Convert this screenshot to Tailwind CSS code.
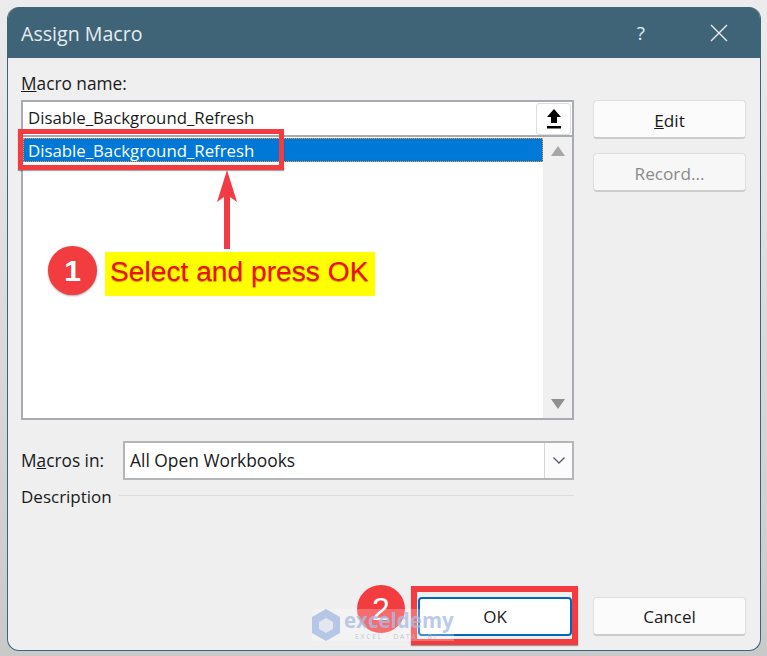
<!DOCTYPE html>
<html>
<head>
    <meta charset="utf-8" />
    <title>Assign Macro</title>
    <script src="https://cdn.jsdelivr.net/npm/@tailwindcss/browser@4"></script>
</head>
<body class="bg-[#e4e4e4] font-['Open_Sans',sans-serif] text-[#1a1a1a]">
    <div class="relative w-[767px] h-[656px] overflow-hidden pt-[7px] pl-[7px] bg-gradient-to-b from-[#ececec] to-[#c9c9c9]">
        <!-- dialog -->
        <div class="w-[754px] h-[644px] flex flex-col rounded-[12px] overflow-hidden bg-[#efefef] border-r border-b border-l border-[#3f6377]">
            <div class="h-[51px] shrink-0 bg-[#3f6377] flex items-center text-white pl-[13px]">
                <span class="text-[19.6px] text-[#e6edf0] mt-[2px]">Assign Macro</span>
                <span class="ml-auto text-[19px] text-[#e6edf0] mt-[1px]">?</span>
                <svg class="ml-[65px] mr-[32px]" width="18" height="18" viewBox="0 0 18 18" fill="none" stroke="#e6edf0" stroke-width="1.4"><path d="M1 1L17 17M17 1L1 17"/></svg>
            </div>
            <div class="flex-1 flex flex-col pl-[13px] pr-[14px]">
                <div class="flex gap-[19px]">
                    <!-- left column -->
                    <div class="w-[553px]">
                        <div class="h-[42px] pt-[14px] text-[17.3px] leading-[24px]"><span class="underline">M</span>acro name:</div>
                        <div class="h-[35px] bg-white border-2 border-b-0 border-[#a9abb2] flex items-center pl-[5px] text-[16.8px] pb-[1px]">
                            <span>Disable_Background_Refresh</span>
                            <div class="ml-auto mr-[1px] mt-[1px] w-[35px] h-[32px] rounded-[3px] bg-white border border-[#dedede] flex items-center justify-center">
                                <svg width="14" height="20" viewBox="0 0 14 20" fill="#000"><path d="M7 0L14 8H10V14H4V8H0Z"/><rect y="17" width="14" height="2.5"/></svg>
                            </div>
                        </div>
                        <div class="h-[285px] bg-white border-2 border-[#a9abb2] flex">
                            <div class="flex-1 pt-[1px]">
                                <div class="h-[24px] pt-[2px] bg-[#0078d7] border border-dotted border-[#ff9a3c] flex items-center pl-[4px] text-[16.8px] text-white">Disable_Background_Refresh</div>
                            </div>
                            <div class="w-[29px] bg-[#f0f0f0] flex flex-col items-center justify-between pt-[9px] pb-[9px]">
                                <svg width="14" height="10" viewBox="0 0 14 10" fill="#a6a6a6"><path d="M7 0L14 10H0Z"/></svg>
                                <svg width="14" height="10" viewBox="0 0 14 10" fill="#8f8f8f"><path d="M0 0H14L7 10Z"/></svg>
                            </div>
                        </div>
                        <div class="mt-[21px] flex items-center h-[39px]">
                            <div class="w-[102px] text-[17.3px]">M<span class="underline">a</span>cros in:</div>
                            <div class="flex-1 h-full bg-white border-2 border-[#b4b5b9] flex items-center pl-[5px] text-[17.4px]">
                                <span>All Open Workbooks</span>
                                <div class="ml-auto w-[28px] h-full bg-[#fbfbfb] border-l border-[#d5d5d5] flex items-center justify-center">
                                    <svg width="12" height="7" viewBox="0 0 12 7" fill="none" stroke="#555b66" stroke-width="1.3"><path d="M0.5 0.5L6 6L11.5 0.5"/></svg>
                                </div>
                            </div>
                        </div>
                        <div class="mt-[4px] flex items-center gap-[7px] text-[17px]">
                            <span>Description</span>
                            <div class="flex-1 h-px bg-[#dcdcdc] -mt-[2px]"></div>
                        </div>
                    </div>
                    <!-- right column -->
                    <div class="w-[153px] pt-[42px] flex flex-col gap-[14px]">
                        <div class="h-[39px] pt-[3px] bg-[#fbfbfb] rounded-[4px] border border-[#dedede] border-b-2 border-b-[#cccccc] flex items-center justify-center text-[17.2px]"><span><span class="underline">E</span>dit</span></div>
                        <div class="h-[39px] pt-[3px] bg-[#f7f7f7] rounded-[4px] border border-[#dedede] border-b-2 border-b-[#cccccc] flex items-center justify-center text-[17.2px] text-[#8a8a8a]">Record...</div>
                    </div>
                </div>
                <div class="mt-auto mb-[14px] flex justify-end gap-[21px]">
                    <div class="w-[154px] h-[39px] pt-[1px] bg-white rounded-[4px] border-2 border-[#0067c0] flex items-center justify-center text-[17px]">OK</div>
                    <div class="w-[153px] h-[39px] pt-[1px] bg-[#fbfbfb] rounded-[4px] border border-[#dedede] border-b-2 border-b-[#cccccc] flex items-center justify-center text-[17px]">Cancel</div>
                </div>
            </div>
        </div>

        <!-- annotations over the dialog -->
        <div class="absolute left-[18px] top-[129px] w-[266px] h-[41px] border-[5px] border-[#f23c3f] shadow-[0_1px_1px_rgba(0,0,0,0.35)]"></div>
        <svg class="absolute left-[215px] top-[170px]" width="24" height="80" viewBox="0 0 24 80" fill="#f23c45"><path d="M12 0L22 32L15 27V79H9V27L2 32Z"/></svg>
        <div class="absolute left-[48px] top-[246px] w-[49px] h-[49px] rounded-full bg-[#f23c3f] shadow-[0_1px_2px_rgba(0,0,0,0.35)] flex items-center justify-center font-['Liberation_Sans'] font-bold text-[30px] text-white">1</div>
        <div class="absolute left-[105px] top-[252px] w-[270px] h-[44px] bg-[#ffff00] flex items-center pl-[5px] pb-[6px] font-['Liberation_Sans'] text-[28.2px] text-[#ef0f0f] [text-shadow:0_1px_1px_rgba(140,70,0,0.55)] whitespace-nowrap">Select and press OK</div>
        <div class="absolute left-[411px] top-[586px] w-[167px] h-[59px] border-[6px] border-[#f23c3f] shadow-[0_1px_1px_rgba(0,0,0,0.35)]"></div>
        <div class="absolute left-[357px] top-[585px] w-[48px] h-[48px] rounded-full bg-[#f23c3f] flex items-center justify-center font-['Liberation_Sans'] text-[32px] text-white">2</div>
        <!-- watermark -->
        <div class="absolute left-[312px] top-[609px] w-[142px] h-[32px] bg-white/25 flex items-start">
            <svg width="28" height="32" viewBox="0 0 28 32"><path d="M14 0L28 8V24L14 32L0 24V8Z" fill="#b6c6e6"/><path d="M14 9L21 13V20L14 24L7 20V13Z" fill="#e3e7ef"/></svg>
            <div class="ml-[4px] leading-none">
                <div class="text-[20.5px] leading-[23px] font-bold text-[#a9bce4]/80">exceldemy</div>
                <div class="ml-[11px] text-[7px] leading-[9px] tracking-[1.6px] text-[#b5bac6]/80 whitespace-nowrap">EXCEL · DATA · BI</div>
            </div>
        </div>
    </div>
</body>
</html>
